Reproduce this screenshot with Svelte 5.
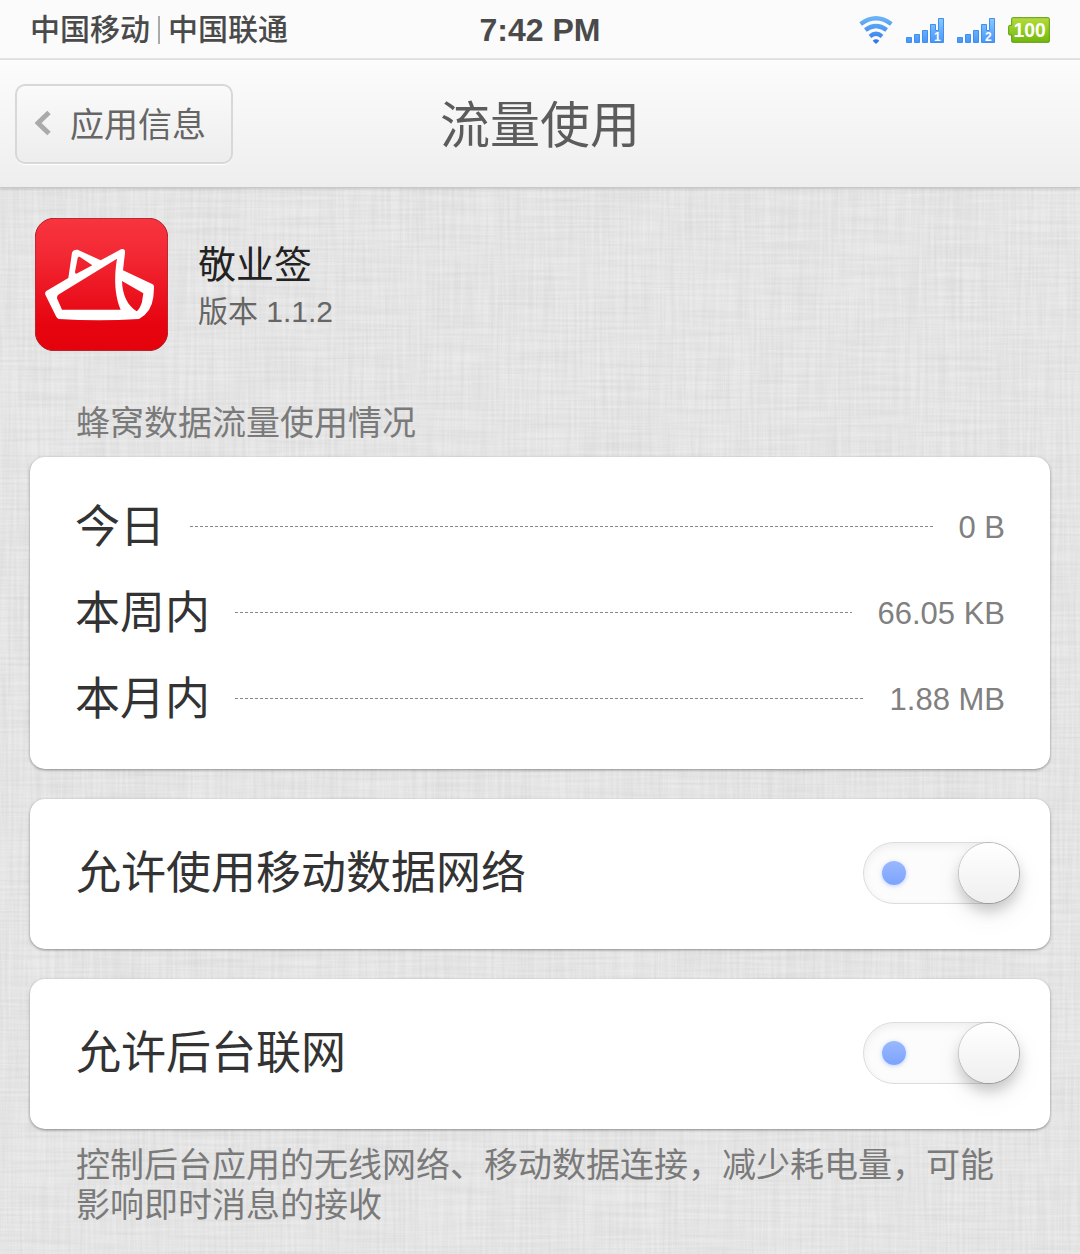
<script>
    let rows = [
        { label: '今日', value: '0 B' },
        { label: '本周内', value: '66.05 KB' },
        { label: '本月内', value: '1.88 MB' }
    ];

    let switches = $state([
        { id: 'mobile-data', label: '允许使用移动数据网络', on: true },
        { id: 'background-data', label: '允许后台联网', on: true }
    ]);

    let sims = [1, 2];
</script>

<svg class="linen" aria-hidden="true">
    <filter id="weave-x" x="0" y="0" width="100%" height="100%">
        <feTurbulence type="fractalNoise" baseFrequency="0.012 0.35" numOctaves="3" seed="4" />
        <feColorMatrix values="0 0 0 0 0  0 0 0 0 0  0 0 0 0 0  0.070 0 0 0 -0.020" />
    </filter>
    <filter id="weave-y" x="0" y="0" width="100%" height="100%">
        <feTurbulence type="fractalNoise" baseFrequency="0.35 0.012" numOctaves="3" seed="9" />
        <feColorMatrix values="0 0 0 0 0  0 0 0 0 0  0 0 0 0 0  0.070 0 0 0 -0.020" />
    </filter>
    <rect width="100%" height="100%" filter="url(#weave-x)" />
    <rect width="100%" height="100%" filter="url(#weave-y)" />
</svg>

<div class="status">
    <div class="carriers">
        <span>中国移动</span>
        <span class="divider"></span>
        <span>中国联通</span>
    </div>
    <time>7:42 PM</time>
    <div class="icons">
        <svg class="wifi" viewBox="0 0 102 84" aria-hidden="true">
            <defs>
                <linearGradient id="blue" gradientUnits="userSpaceOnUse" x1="0" y1="0" x2="0" y2="84">
                    <stop offset="0" stop-color="#6db6f8" />
                    <stop offset="1" stop-color="#2f79ee" />
                </linearGradient>
            </defs>
            <g fill="none" stroke="url(#blue)" stroke-width="13">
                <path d="M5 24Q51-10 97 24" />
                <path d="M19 42Q51 18 83 42" />
                <path d="M33 61Q51 46 69 61" />
            </g>
            <path d="M41 74Q51 66 61 74L51 84z" fill="#2f79ee" />
        </svg>
        {#each sims as sim}
        <svg class="signal" viewBox="0 0 114 75" aria-hidden="true">
            <defs>
                <linearGradient id="bars{sim}" x1="0" y1="0" x2="0" y2="75" gradientUnits="userSpaceOnUse">
                    <stop offset="0" stop-color="#8ccbff" />
                    <stop offset="1" stop-color="#4793fa" />
                </linearGradient>
            </defs>
            <path d="M1.500 58.500h15v15h-15zM25.500 49.500h15v24h-15zM49.500 37.500h15v36h-15zM73.500 19.500h15v18h9v-36h15v72h-39z" fill="url(#bars{sim})" stroke="#3f8ff0" stroke-width="3" />
            <text x="94" y="69" text-anchor="middle">{sim}</text>
        </svg>
        {/each}
        <svg class="battery" viewBox="0 0 126 78" aria-hidden="true">
            <defs>
                <linearGradient id="green" x1="0" y1="0" x2="0" y2="1">
                    <stop offset="0" stop-color="#b4dc3c" />
                    <stop offset="1" stop-color="#73b80c" />
                </linearGradient>
            </defs>
            <path d="M14 2h107q3 0 3 3v68q0 3-3 3H14q-3 0-3-3V54H5q-3 0-3-3V28q0-3 3-3h6V5q0-3 3-3z" fill="url(#green)" stroke="#5c9c10" stroke-width="3" />
            <text x="65" y="60" text-anchor="middle">100</text>
        </svg>
    </div>
</div>

<header>
    <button class="back">
        <svg viewBox="0 0 16 26" aria-hidden="true">
            <path d="M14 2.500L3 13l11 10.500" fill="none" stroke="#aaa" stroke-width="5" />
        </svg>
        应用信息
    </button>
    <h1>流量使用</h1>
</header>

<main>
    <section class="app">
        <svg viewBox="0 0 399 399" aria-hidden="true">
            <defs>
                <linearGradient id="red" x1="0" y1="0" x2="0" y2="1">
                    <stop offset="0" stop-color="#f8343e" />
                    <stop offset="0.250" stop-color="#f32a35" />
                    <stop offset="0.800" stop-color="#e60410" />
                    <stop offset="1" stop-color="#e4020c" />
                </linearGradient>
            </defs>
            <rect x="1" y="1" width="397" height="397" rx="56" fill="url(#red)" stroke="#b0202a" stroke-width="3" />
            <path
                fill="#fff"
                fill-rule="evenodd"
                d="M34 219L100 180L111 104Q114 94 128 95L197 127L258 94Q271 90 270 104L264 157L353 199Q358 202 357 210L355 238Q349 284 312 303Q190 311 71 303Q66 301 63 295L31 230Q29 222 34 219z
                M135 117Q130 115 128 120L120 162Q120 169 127 166L172 142z
                M72 229L246 122C237 175 238 232 257 275L81 275L66 241Q65 233 72 229z
                M261 189L325 226L321 252Q315 272 305 280C279 264 262 232 261 189z"
            />
        </svg>
        <div>
            <h2>敬业签</h2>
            <p>版本 1.1.2</p>
        </div>
    </section>

    <h3>蜂窝数据流量使用情况</h3>
    <dl class="card usage">
        {#each rows as row}
        <div>
            <dt>{row.label}</dt>
            <dd>{row.value}</dd>
        </div>
        {/each}
    </dl>

    {#each switches as s}
    <div class="card option">
        <label for={s.id}>{s.label}</label>
        <input id={s.id} type="checkbox" bind:checked={s.on} />
    </div>
    {/each}
    <p class="note">控制后台应用的无线网络、移动数据连接，减少耗电量，可能影响即时消息的接收</p>
</main>

<style>
    :global(body) {
        background: #ebebeb;
        font-family: "Liberation Sans", "Noto Sans CJK SC", sans-serif;
        color: #333;
    }
    h1, h2, h3, p, dl, dd {
        margin: 0;
        font-weight: 400;
    }
    .linen {
        position: absolute;
        top: 0;
        left: 0;
        width: 100%;
        height: 100%;
        z-index: -1;
    }
    .status {
        display: grid;
        grid-template-columns: 1fr auto 1fr;
        align-items: center;
        box-sizing: border-box;
        height: 60px;
        padding: 2px 30px 0;
        background: #fbfbfb;
        border-bottom: 2px solid #e5e5e5;
        color: #4a4a4a;
    }
    .carriers {
        display: flex;
        align-items: center;
        gap: 8px;
        font-size: 30px;
        font-weight: 500;
        line-height: 40px;
    }
    .divider {
        width: 2px;
        height: 28px;
        background: #aaa;
    }
    time {
        font-size: 32px;
        font-weight: 700;
    }
    .icons {
        display: flex;
        justify-content: flex-end;
        align-items: center;
        gap: 13px;
    }
    .wifi {
        width: 34px;
        height: 28px;
    }
    .signal {
        width: 38px;
        height: 25px;
    }
    .battery {
        width: 42px;
        height: 26px;
    }
    .icons text {
        fill: #fff;
        font-size: 36px;
        font-weight: 700;
    }
    .battery text {
        font-size: 58px;
    }
    header {
        position: relative;
        display: grid;
        grid-template-columns: 1fr auto 1fr;
        align-items: center;
        height: 127px;
        padding: 0 15px;
        background: linear-gradient(#fcfcfc, #eee);
        border-bottom: 1px solid #c8c8c8;
        box-shadow: 0 1px 3px rgba(0, 0, 0, 0.15);
    }
    h1 {
        padding-top: 4px;
        font-size: 50px;
        line-height: 64px;
        color: #5c5c5c;
    }
    .back {
        display: flex;
        align-items: center;
        justify-self: start;
        gap: 19px;
        height: 80px;
        padding: 0 25px 2px 18px;
        border: 2px solid #d8d8d8;
        border-radius: 10px;
        background: linear-gradient(#fafafa, #ededed);
        box-shadow: 0 1px 0 #fff;
        font-family: inherit;
        font-size: 34px;
        color: #666;
    }
    .back svg {
        width: 16px;
        height: 26px;
    }
    main {
        padding: 30px 30px 27px;
    }
    .app {
        display: flex;
        align-items: center;
        gap: 30px;
        padding-left: 5px;
    }
    .app svg {
        width: 133px;
        height: 133px;
    }
    .app div {
        padding-top: 6px;
    }
    h2 {
        font-size: 38px;
        line-height: 48px;
        color: #222;
    }
    .app p {
        font-size: 30px;
        line-height: 46px;
        color: #666;
    }
    h3 {
        margin: 52px 46px 14px;
        font-size: 34px;
        line-height: 40px;
        color: #7a7a7a;
    }
    .card {
        margin-bottom: 30px;
        border-radius: 15px;
        background: #fff;
        box-shadow: 0 1px 3px rgba(0, 0, 0, 0.4);
    }
    .usage {
        padding: 27px 45px;
    }
    .usage div {
        display: flex;
        align-items: center;
        height: 86px;
    }
    dt {
        display: flex;
        flex: 1;
        align-items: center;
        font-size: 45px;
        line-height: 60px;
    }
    /* dashed leader between label and value */
    dt::after {
        content: "";
        flex: 1;
        height: 1px;
        margin: 0 25px 4px;
        background: repeating-linear-gradient(90deg, #888 0 3px, transparent 3px 5px);
    }
    dt, label {
        padding-top: 2px;
    }
    dd {
        padding-top: 2px;
        font-size: 31px;
        color: #808080;
    }
    .option {
        display: flex;
        align-items: center;
        justify-content: space-between;
        box-sizing: border-box;
        height: 150px;
        padding: 0 30px 2px 46px;
    }
    label {
        font-size: 45px;
        line-height: 60px;
    }
    input {
        position: relative;
        appearance: none;
        box-sizing: border-box;
        width: 157px;
        height: 62px;
        margin: 0;
        border: 1px solid #dcdcdc;
        border-radius: 31px;
        background: #fcfcfc;
        box-shadow: inset 0 3px 8px rgba(0, 0, 0, 0.06);
    }
    input::before {
        content: "";
        position: absolute;
        top: 18px;
        left: 18px;
        width: 24px;
        height: 24px;
        border-radius: 50%;
        background: linear-gradient(#9ab8fd, #7ba3ff);
        box-shadow: 0 1px 4px rgba(123, 163, 255, 0.5);
    }
    input::after {
        content: "";
        position: absolute;
        top: 0;
        left: 0;
        width: 60px;
        height: 60px;
        border-radius: 50%;
        background: linear-gradient(#fff, #efefef);
        box-shadow: 0 0 0 1px rgba(0, 0, 0, 0.14), 0 8px 14px rgba(0, 0, 0, 0.2), 0 12px 32px rgba(0, 0, 0, 0.06);
    }
    input:checked::after {
        left: 95px;
    }
    input:not(:checked)::before {
        left: 113px;
        background: #ddd;
        box-shadow: none;
    }
    .note {
        margin: -14px 46px 0;
        font-size: 34px;
        line-height: 40px;
        color: #7a7a7a;
    }
</style>
